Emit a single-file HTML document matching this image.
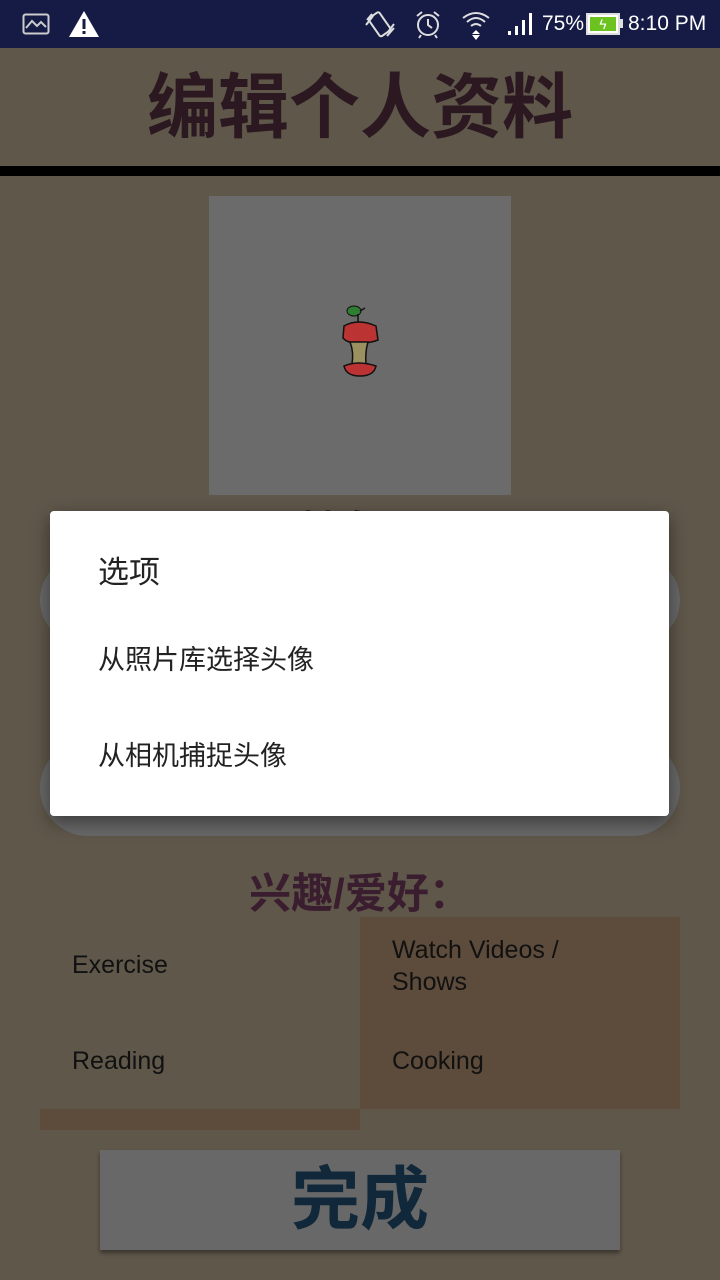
<!DOCTYPE html>
<html><head><meta charset="utf-8"><style>
*{margin:0;padding:0;box-sizing:border-box}
body{width:720px;height:1280px;background:#5f574a;position:relative;overflow:hidden;font-family:"Liberation Sans","Noto Sans CJK SC",sans-serif}
.a{position:absolute}
</style></head><body>
<div class="a" style="left:0;top:0;width:720px;height:48px;background:#151b45;color:#fff">
  <svg class="a" style="left:22px;top:13px" width="28" height="22" viewBox="0 0 28 22"><rect x="1.5" y="1.5" width="25" height="19" rx="2" fill="none" stroke="#ccc" stroke-width="2"/><path d="M4 15 L10 8 L15 13 L19 9 L24 14" fill="none" stroke="#ccc" stroke-width="2"/></svg>
  <svg class="a" style="left:68px;top:10px" width="32" height="28" viewBox="0 0 32 28"><path d="M16 1 L31 27 H1 Z" fill="#fff"/><rect x="14.5" y="9" width="3" height="10" fill="#151b45"/><rect x="14.5" y="21" width="3" height="3" fill="#151b45"/></svg>
  <svg class="a" style="left:364px;top:10px" width="32" height="28" viewBox="0 0 32 28"><g fill="none" stroke="#ddd" stroke-width="2"><rect x="9" y="3" width="13" height="22" rx="2" transform="rotate(-35 16 14)"/><path d="M3 10 L8 4 M2 15 L9 6 M24 22 L30 14 M23 26 L30 18"/></g></svg>
  <svg class="a" style="left:413px;top:9px" width="30" height="30" viewBox="0 0 30 30"><g fill="none" stroke="#ddd" stroke-width="2"><circle cx="15" cy="16" r="10"/><path d="M15 10 V16 L19 19 M4 7 L9 3 M26 7 L21 3 M8 26 L6 29 M22 26 L24 29"/></g></svg>
  <svg class="a" style="left:460px;top:9px" width="32" height="32" viewBox="0 0 32 32"><g fill="none" stroke="#ddd" stroke-width="2"><path d="M3 9 Q16 -1 29 9 M7 13 Q16 5 25 13 M11 17 Q16 13 21 17"/></g><path d="M12 25 L16 21 L20 25 Z M12 26 H20 L16 31 Z" fill="#fff"/></svg>
  <svg class="a" style="left:506px;top:12px" width="30" height="24" viewBox="0 0 30 24"><rect x="2" y="19" width="3" height="4" fill="#fff"/><rect x="9" y="14" width="3" height="9" fill="#fff"/><rect x="16" y="8" width="3" height="15" fill="#fff"/><rect x="23" y="1" width="3" height="22" fill="#fff"/></svg>
  <div class="a" style="left:542px;top:12px;font-size:21px">75%</div>
  <div class="a" style="left:586px;top:13px;width:34px;height:22px;border:2px solid #ddd;background:#fff;padding:2px"><div style="width:100%;height:100%;background:#6cc21f;color:#fff;font-size:14px;text-align:center;line-height:14px">ϟ</div></div>
  <div class="a" style="left:620px;top:19px;width:3px;height:9px;background:#ddd"></div>
  <div class="a" style="left:628px;top:12px;font-size:21px">8:10 PM</div>
</div>
<div class="a" style="left:0;top:64px;width:720px;text-align:center;font-size:71px;font-weight:bold;color:#2c1820;line-height:90px">编辑个人资料</div>
<div class="a" style="left:0;top:166px;width:720px;height:10px;background:#000"></div>
<div class="a" style="left:209px;top:196px;width:302px;height:299px;background:#6b6b6b"></div>
<svg class="a" style="left:338px;top:302px" width="46" height="78" viewBox="0 0 46 78"><ellipse cx="16" cy="9" rx="7" ry="5" fill="#2e7d32" stroke="#111"/><path d="M22 9 L27 6 M20 12 V22" stroke="#111" stroke-width="1.5"/><path d="M6 24 Q20 16 38 24 L40 38 Q30 42 20 40 Q10 42 5 36 Z" fill="#b33" stroke="#111" stroke-width="1.5"/><path d="M12 40 L30 40 Q27 50 28 62 L14 62 Q16 50 12 40Z" fill="#9a9060" stroke="#111" stroke-width="1.5"/><path d="M6 64 Q20 58 38 64 Q36 74 22 74 Q8 74 6 64Z" fill="#b33" stroke="#111" stroke-width="1.5"/></svg>
<div class="a" style="left:300px;top:498px;font-size:40px;font-weight:bold;color:#2c1820">姓名</div>
<div class="a" style="left:40px;top:555px;width:640px;height:90px;border-radius:45px;background:#686868"></div>
<div class="a" style="left:40px;top:740px;width:640px;height:96px;border-radius:48px;background:#686868"></div>
<div class="a" style="left:50px;top:511px;width:619px;height:305px;background:#fff;border-radius:4px;box-shadow:0 6px 18px rgba(0,0,0,.45)">
  <div class="a" style="left:48px;top:36px;font-size:31px;color:#222">选项</div>
  <div class="a" style="left:48px;top:127px;font-size:27px;color:#222">从照片库选择头像</div>
  <div class="a" style="left:48px;top:223px;font-size:27px;color:#222">从相机捕捉头像</div>
</div>
<div class="a" style="left:0;top:860px;width:720px;text-align:center;font-size:42px;font-weight:bold;color:#3a1d2e">兴趣/爱好：</div>
<div class="a" style="left:360px;top:917px;width:320px;height:192px;background:#5d4c3b"></div>
<div class="a" style="left:40px;top:1109px;width:320px;height:21px;background:#5d4c3b"></div>
<div class="a" style="left:72px;top:951px;font-size:25px;color:#111">Exercise</div>
<div class="a" style="left:392px;top:934px;font-size:25px;color:#111;line-height:32px">Watch Videos /<br>Shows</div>
<div class="a" style="left:72px;top:1047px;font-size:25px;color:#111">Reading</div>
<div class="a" style="left:392px;top:1047px;font-size:25px;color:#111">Cooking</div>
<div class="a" style="left:100px;top:1150px;width:520px;height:100px;background:#686868;box-shadow:0 3px 4px rgba(0,0,0,.4);text-align:center;font-size:69px;font-weight:bold;color:#10283a;line-height:100px">完成</div>
</body></html>
